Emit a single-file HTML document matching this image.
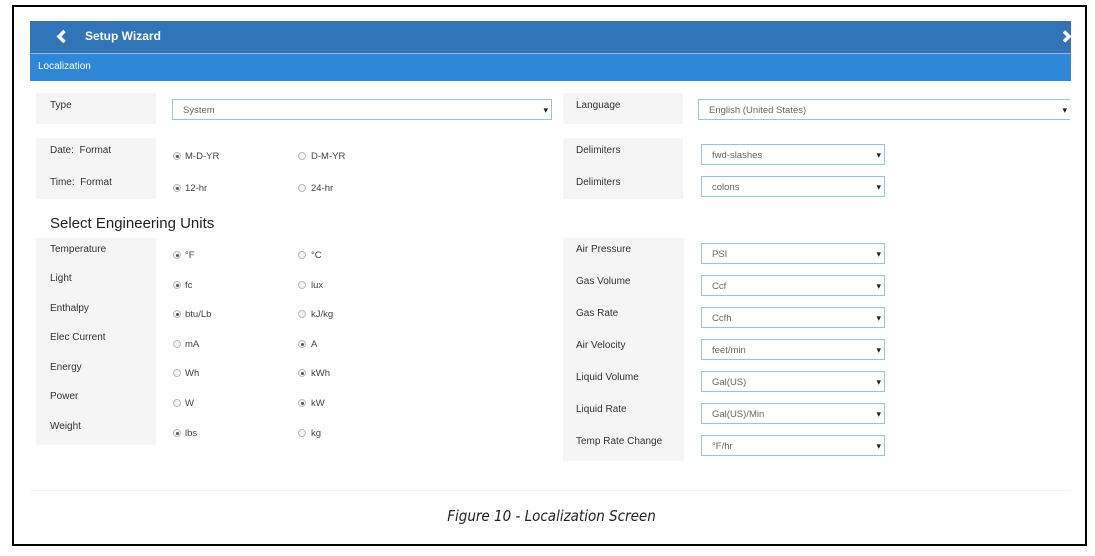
<!DOCTYPE html>
<html><head><style>
*{margin:0;padding:0;box-sizing:border-box}
body{width:1095px;height:556px;background:#fff;position:relative;overflow:hidden;font-family:"Liberation Sans",Arial,sans-serif;}
.a{position:absolute}
.frame{left:12px;top:5px;width:1075px;height:541px;border:2px solid #000}
.lbl{background:#f5f5f5}
.t{font-size:10px;color:#333;position:absolute;white-space:nowrap}
.sel{position:absolute;border:1px solid #9cc3dc;background:#fff;height:21px;font-size:9.5px;color:#666;padding:5px 0 0 10px;white-space:nowrap}
.sel:after{content:"\25BE";position:absolute;right:3px;top:5px;font-size:9px;color:#222}
.r{position:absolute;width:8px;height:8px;border:1px solid #bbb;border-radius:50%;background:#f3f3f3}
.r.on:after{content:"";position:absolute;left:1.5px;top:1.5px;width:3px;height:3px;border-radius:50%;background:#555}
.rt{font-size:9.5px;color:#444;position:absolute;white-space:nowrap}
</style></head><body>
<div class="a frame"></div>
<div class="a" style="left:30px;top:21px;width:1041px;height:32px;background:#3274b8"></div>
<div class="a" style="left:30px;top:53px;width:1041px;height:1px;background:#8fb6e0"></div>
<div class="a" style="left:30px;top:54px;width:1041px;height:27px;background:#2f87d8"></div>
<svg class="a" style="left:55px;top:29px" width="14" height="15"><path d="M9.5 2 L4 7.5 L9.5 13" stroke="#fff" stroke-width="3.5" fill="none"/></svg>
<div class="a" style="left:85px;top:29px;color:#fff;font-size:12px;font-weight:bold">Setup Wizard</div>
<svg class="a" style="left:1063px;top:30px" width="8" height="13"><path d="M1 1.5 L6 6.5 L1 11.5" stroke="#fff" stroke-width="3.5" fill="none"/></svg>
<div class="a" style="left:38px;top:61px;color:#fff;font-size:10px">Localization</div>

<div class="a lbl" style="left:36px;top:93px;width:120px;height:31px"></div>
<div class="t" style="left:50px;top:100px">Type</div>
<div class="sel" style="left:172px;top:99px;width:380px">System</div>
<div class="a lbl" style="left:563px;top:93px;width:120px;height:31px"></div>
<div class="t" style="left:576px;top:100px">Language</div>
<div class="sel" style="left:698px;top:99px;width:372px;border-right:none">English (United States)</div>

<div class="a lbl" style="left:36px;top:138px;width:120px;height:61px"></div>
<div class="t" style="left:50px;top:145px">Date:&nbsp; Format</div>
<div class="t" style="left:50px;top:177px">Time:&nbsp; Format</div>
<div class="r on" style="left:173px;top:152px"></div><div class="rt" style="left:185px;top:151px">M-D-YR</div>
<div class="r" style="left:298px;top:152px"></div><div class="rt" style="left:311px;top:151px">D-M-YR</div>
<div class="r on" style="left:173px;top:184px"></div><div class="rt" style="left:185px;top:183px">12-hr</div>
<div class="r" style="left:298px;top:184px"></div><div class="rt" style="left:311px;top:183px">24-hr</div>

<div class="a lbl" style="left:563px;top:138px;width:120px;height:61px"></div>
<div class="t" style="left:576px;top:145px">Delimiters</div>
<div class="t" style="left:576px;top:177px">Delimiters</div>
<div class="sel" style="left:701px;top:144px;width:184px">fwd-slashes</div>
<div class="sel" style="left:701px;top:176px;width:184px">colons</div>

<div class="a" style="left:50px;top:215px;font-size:15px;color:#222">Select Engineering Units</div>

<div class="a lbl" style="left:36px;top:238px;width:120px;height:207px"></div>
<div class="t" style="left:50px;top:244px">Temperature</div>
<div class="t" style="left:50px;top:273px">Light</div>
<div class="t" style="left:50px;top:303px">Enthalpy</div>
<div class="t" style="left:50px;top:332px">Elec Current</div>
<div class="t" style="left:50px;top:362px">Energy</div>
<div class="t" style="left:50px;top:391px">Power</div>
<div class="t" style="left:50px;top:421px">Weight</div>

<div class="r on" style="left:173px;top:251px"></div><div class="rt" style="left:185px;top:250px">°F</div>
<div class="r" style="left:298px;top:251px"></div><div class="rt" style="left:311px;top:250px">°C</div>
<div class="r on" style="left:173px;top:281px"></div><div class="rt" style="left:185px;top:280px">fc</div>
<div class="r" style="left:298px;top:281px"></div><div class="rt" style="left:311px;top:280px">lux</div>
<div class="r on" style="left:173px;top:310px"></div><div class="rt" style="left:185px;top:309px">btu/Lb</div>
<div class="r" style="left:298px;top:310px"></div><div class="rt" style="left:311px;top:309px">kJ/kg</div>
<div class="r" style="left:173px;top:340px"></div><div class="rt" style="left:185px;top:339px">mA</div>
<div class="r on" style="left:298px;top:340px"></div><div class="rt" style="left:311px;top:339px">A</div>
<div class="r" style="left:173px;top:369px"></div><div class="rt" style="left:185px;top:368px">Wh</div>
<div class="r on" style="left:298px;top:369px"></div><div class="rt" style="left:311px;top:368px">kWh</div>
<div class="r" style="left:173px;top:399px"></div><div class="rt" style="left:185px;top:398px">W</div>
<div class="r on" style="left:298px;top:399px"></div><div class="rt" style="left:311px;top:398px">kW</div>
<div class="r on" style="left:173px;top:429px"></div><div class="rt" style="left:185px;top:428px">lbs</div>
<div class="r" style="left:298px;top:429px"></div><div class="rt" style="left:311px;top:428px">kg</div>

<div class="a lbl" style="left:563px;top:238px;width:121px;height:223px"></div>
<div class="t" style="left:576px;top:244px">Air Pressure</div>
<div class="t" style="left:576px;top:276px">Gas Volume</div>
<div class="t" style="left:576px;top:308px">Gas Rate</div>
<div class="t" style="left:576px;top:340px">Air Velocity</div>
<div class="t" style="left:576px;top:372px">Liquid Volume</div>
<div class="t" style="left:576px;top:404px">Liquid Rate</div>
<div class="t" style="left:576px;top:436px">Temp Rate Change</div>
<div class="sel" style="left:701px;top:243px;width:184px">PSI</div>
<div class="sel" style="left:701px;top:275px;width:184px">Ccf</div>
<div class="sel" style="left:701px;top:307px;width:184px">Ccfh</div>
<div class="sel" style="left:701px;top:339px;width:184px">feet/min</div>
<div class="sel" style="left:701px;top:371px;width:184px">Gal(US)</div>
<div class="sel" style="left:701px;top:403px;width:184px">Gal(US)/Min</div>
<div class="sel" style="left:701px;top:435px;width:184px">°F/hr</div>

<div class="a" style="left:30px;top:490px;width:1041px;height:1px;background:#f3f3f3"></div>
<div class="a" style="left:4px;width:1095px;top:507px;text-align:center;font-size:15px;font-style:italic;color:#222;font-family:'DejaVu Sans Condensed','Liberation Sans',sans-serif">Figure 10 - Localization Screen</div>
</body></html>
